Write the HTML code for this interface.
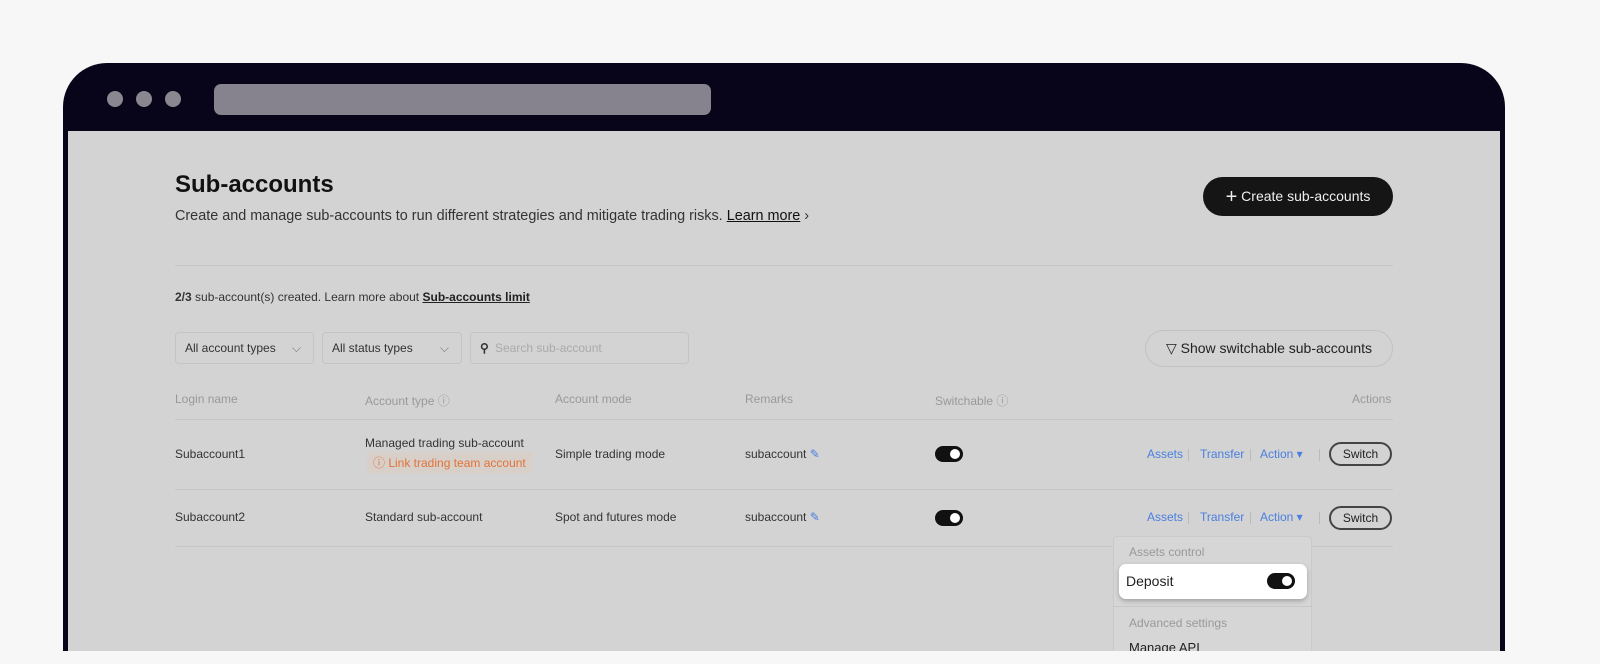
<!DOCTYPE html>
<html style="width:1600px;height:664px;overflow:hidden"><head><style>
*{margin:0;padding:0;box-sizing:border-box}
body{width:1600px;height:664px;background:#f7f7f7;font-family:"Liberation Sans",sans-serif;position:relative;overflow:hidden}
.frame{position:absolute;left:63px;top:63px;width:1442px;height:588px;background:#08041a;border-radius:44px 44px 0 0}
.dot{position:absolute;top:91px;width:16px;height:16px;border-radius:50%;background:#8a8791}
.bar{position:absolute;left:214px;top:84px;width:497px;height:31px;border-radius:7px;background:#86838f}
.content{position:absolute;left:68px;top:131px;width:1432px;height:520px;background:#d3d3d3}
.a{position:absolute;white-space:nowrap}
.h{color:#999;font-size:12px}
.c{color:#333;font-size:12px}
.lnk{color:#4a7fe0;font-size:12px}
.sep{position:absolute;width:1px;height:12px;background:#bbb}
.tg{position:absolute;width:28px;height:16px;border-radius:8px;background:#111}
.tg:after{content:"";position:absolute;right:3px;top:3px;width:10px;height:10px;border-radius:50%;background:#fff}
.sw{position:absolute;width:63px;height:24px;border:2px solid #444;border-radius:12px;font-size:12px;color:#222;text-align:center;line-height:20px}
.sel{position:absolute;top:332px;height:32px;border:1px solid #c4c4c4;border-radius:4px;font-size:12px;color:#333;padding-left:9px;line-height:30px}
.line{position:absolute;left:175px;width:1218px;height:1px;background:#c6c6c6}
</style></head><body>
<div class="frame"></div>
<div class="dot" style="left:107px"></div><div class="dot" style="left:136px"></div><div class="dot" style="left:165px"></div>
<div class="bar"></div>
<div class="content"></div>
<div class="a" style="left:175px;top:171px;font-size:24px;font-weight:bold;color:#111">Sub-accounts</div>
<div class="a" style="left:175px;top:208px;font-size:14.4px;color:#333">Create and manage sub-accounts to run different strategies and mitigate trading risks. <u style="color:#111">Learn more</u> ›</div>
<div class="a" style="left:1203px;top:177px;width:190px;height:39px;border-radius:20px;background:#151515;color:#eee;font-size:14px;line-height:39px;text-align:center"><span style="font-size:20px;vertical-align:-2px">+</span> Create sub-accounts</div>
<div class="line" style="top:265px"></div>
<div class="a" style="left:175px;top:290px;font-size:12px;color:#333"><b>2/3</b> sub-account(s) created. Learn more about <u style="font-weight:bold;color:#222">Sub-accounts limit</u></div>
<div class="sel" style="left:175px;width:139px">All account types <span style="position:absolute;right:12px;color:#777">⌵</span></div>
<div class="sel" style="left:322px;width:140px">All status types <span style="position:absolute;right:12px;color:#777">⌵</span></div>
<div class="sel" style="left:470px;width:219px;color:#aaa;padding-left:24px"><span style="position:absolute;left:9px;color:#333;font-weight:bold">⚲</span>Search sub-account</div>
<div class="a" style="left:1145px;top:330px;width:248px;height:37px;border:1px solid #c2c2c2;border-radius:19px;font-size:14px;color:#222;line-height:35px;text-align:center">▽ Show switchable sub-accounts</div>
<div class="a h" style="left:175px;top:392px">Login name</div>
<div class="a h" style="left:365px;top:392px">Account type ⓘ</div>
<div class="a h" style="left:555px;top:392px">Account mode</div>
<div class="a h" style="left:745px;top:392px">Remarks</div>
<div class="a h" style="left:935px;top:392px">Switchable ⓘ</div>
<div class="a h" style="left:1352px;top:392px">Actions</div>
<div class="line" style="top:419px"></div>
<div class="a c" style="left:175px;top:447px">Subaccount1</div>
<div class="a c" style="left:365px;top:436px">Managed trading sub-account</div>
<div class="a" style="left:367px;top:452px;padding:2px 6px;background:#d9cfc9;border-radius:3px;color:#e0733a;font-size:12px">ⓘ Link trading team account</div>
<div class="a c" style="left:555px;top:447px">Simple trading mode</div>
<div class="a c" style="left:745px;top:447px">subaccount <span style="color:#4a7fe0">✎</span></div>
<div class="tg" style="left:935px;top:446px"></div>
<div class="line" style="top:489px"></div>
<div class="a c" style="left:175px;top:510px">Subaccount2</div>
<div class="a c" style="left:365px;top:510px">Standard sub-account</div>
<div class="a c" style="left:555px;top:510px">Spot and futures mode</div>
<div class="a c" style="left:745px;top:510px">subaccount <span style="color:#4a7fe0">✎</span></div>
<div class="tg" style="left:935px;top:510px"></div>
<div class="line" style="top:546px"></div>
<div class="a lnk" style="left:1147px;top:447px">Assets</div><div class="sep" style="left:1188px;top:449px"></div>
<div class="a lnk" style="left:1200px;top:447px">Transfer</div><div class="sep" style="left:1250px;top:449px"></div>
<div class="a lnk" style="left:1260px;top:447px">Action ▾</div><div class="sep" style="left:1319px;top:449px"></div>
<div class="sw" style="left:1329px;top:442px">Switch</div>
<div class="a lnk" style="left:1147px;top:510px">Assets</div><div class="sep" style="left:1188px;top:512px"></div>
<div class="a lnk" style="left:1200px;top:510px">Transfer</div><div class="sep" style="left:1250px;top:512px"></div>
<div class="a lnk" style="left:1260px;top:510px">Action ▾</div><div class="sep" style="left:1319px;top:512px"></div>
<div class="sw" style="left:1329px;top:506px">Switch</div>
<div class="a" style="left:1113px;top:536px;width:199px;height:115px;background:#d6d6d6;border:1px solid #cacaca;border-bottom:none;border-radius:4px 4px 0 0"></div>
<div class="a h" style="left:1129px;top:545px">Assets control</div>
<div class="a" style="left:1119px;top:564px;width:188px;height:35px;background:#fff;border-radius:7px;box-shadow:0 2px 5px rgba(0,0,0,.25)"></div>
<div class="a" style="left:1126px;top:573px;font-size:14px;color:#222">Deposit</div>
<div class="tg" style="left:1267px;top:573px"></div>
<div class="line" style="left:1113px;width:199px;top:606px"></div>
<div class="a h" style="left:1129px;top:616px">Advanced settings</div>
<div class="a" style="left:1129px;top:640px;height:11px;overflow:hidden;font-size:13px;color:#222">Manage API</div>
</body></html>
